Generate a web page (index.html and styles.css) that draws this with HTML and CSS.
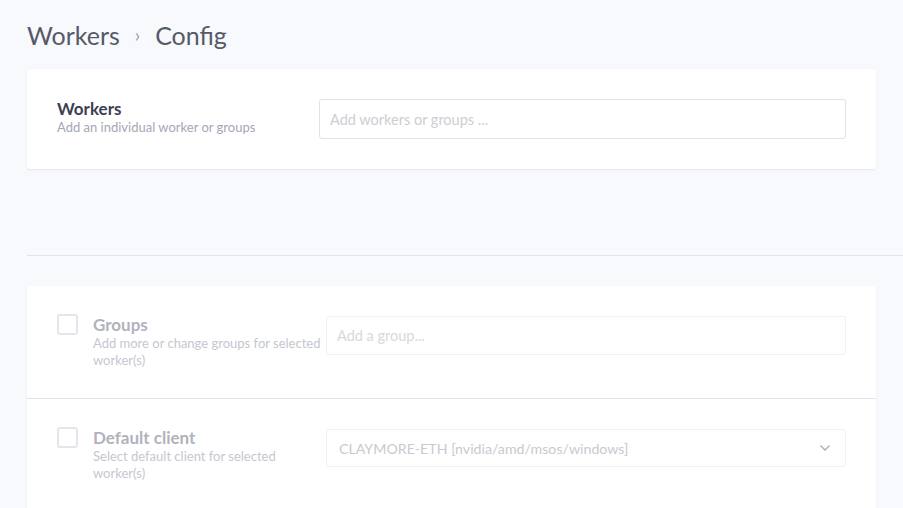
FILE: index.html
```html
<!DOCTYPE html>
<html>
<head>
<meta charset="utf-8">
<link rel="stylesheet" href="styles.css">
</head>
<body>
<div class="page">
  <h1 class="crumbs"><span>Workers</span><span class="sep">›</span><span>Config</span></h1>

  <div class="card card-top">
    <div class="label-col">
      <div class="label">Workers</div>
      <div class="hint">Add an individual worker or groups</div>
    </div>
    <div class="field">
      <input class="input" type="text" placeholder="Add workers or groups ...">
    </div>
  </div>

  <hr class="divider">

  <div class="card card-list">
    <div class="row">
      <span class="check"></span>
      <div class="text-col">
        <div class="label faded">Groups</div>
        <div class="hint faded">Add more or change groups for selected worker(s)</div>
      </div>
      <div class="field">
        <input class="input light" type="text" placeholder="Add a group...">
      </div>
    </div>
    <div class="row">
      <span class="check"></span>
      <div class="text-col">
        <div class="label faded">Default client</div>
        <div class="hint faded">Select default client for selected worker(s)</div>
      </div>
      <div class="field">
        <div class="select">
          <span class="select-text">CLAYMORE-ETH [nvidia/amd/msos/windows]</span>
          <svg class="chev" width="12" height="8" viewBox="0 0 12 8"><path d="M1.5 1.5 L6 6 L10.5 1.5" fill="none" stroke="#a9acbd" stroke-width="1.3"/></svg>
        </div>
      </div>
    </div>
  </div>
</div>
</body>
</html>
```

FILE: styles.css
```css
* { box-sizing: border-box; }
html, body { margin: 0; padding: 0; }
body {
  background: #f7f9fd;
  font-family: Lato, "Open Sans", sans-serif;
  width: 903px;
  height: 508px;
  overflow: hidden;
}
.page {
  padding: 0 27px;
}
.crumbs {
  margin: 0;
  padding-top: 18px;
  height: 69px;
  font-size: 25px;
  line-height: 34px;
  font-weight: 400;
  color: #565968;
  display: flex;
}
.crumbs .sep {
  color: #9a9db0;
  font-size: 19px;
  margin: 0 15px 0 15px;
}
.card {
  background: #fff;
  border-radius: 3px;
  box-shadow: 0 1px 2px rgba(60, 70, 90, 0.10);
}
.card-top {
  display: flex;
  align-items: center;
  padding: 30px;
  height: 100px;
}
.label-col {
  width: 262px;
  flex: none;
  margin-top: -4px;
}
.label {
  font-size: 17px;
  font-weight: 700;
  color: #3d3e52;
  line-height: 20px;
}
.hint {
  font-size: 13px;
  color: #a4a7b5;
  line-height: 17px;
}
.field { flex: 1; }
.input {
  display: block;
  width: 100%;
  height: 40px;
  border: 1px solid #dde3ec;
  border-radius: 3px;
  padding: 0 10px;
  font-family: Lato, "Open Sans", sans-serif;
  font-size: 14.5px;
  color: #555;
  background: #fff;
  outline: none;
}
.input::placeholder { color: #cdced3; }
.input.light { border-color: #eef1f5; height: 39px; }
.input.light::placeholder { color: #d8d8dc; }
.divider {
  border: 0;
  border-top: 1px solid #dfe4ea;
  margin: 86px -27px 30px 0;
  height: 0;
}
.card-list {
  height: 222px;
  overflow: hidden;
  border-radius: 3px 3px 0 0;
}
.row {
  display: flex;
  align-items: flex-start;
  padding: 28px 30px 0 30px;
  height: 112px;
}
.row + .row {
  border-top: 1px solid #dde6ef;
  height: auto;
}
.check {
  width: 21px;
  height: 21px;
  border: 2px solid #e3e6ec;
  border-radius: 3px;
  flex: none;
  margin-right: 15px;
}
.text-col {
  width: 233px;
  flex: none;
  padding-top: 1px;
}
.label.faded { color: #b1b2bc; }
.hint.faded { color: #c5c7d0; }
.row .field { padding-top: 2px; }
.select {
  height: 38px;
  border: 1px solid #eef1f5;
  border-radius: 3px;
  display: flex;
  align-items: center;
  justify-content: space-between;
  padding: 0 14px 0 12px;
  background: #fff;
}
.select-text {
  font-size: 14.2px;
  color: #c9cad0;
}
.chev { display: block; }
```
